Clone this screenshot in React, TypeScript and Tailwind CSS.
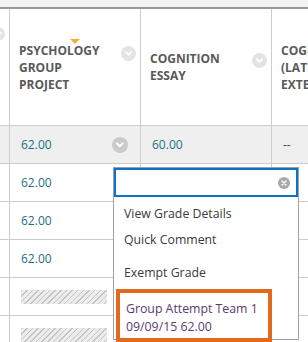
import React from 'react';

const font = "font-['Open_Sans',sans-serif]";

interface CircleProps {
  size: number;
  bg: string;
}

const ChevronCircle: React.FC<CircleProps> = ({ size, bg }) => (
  <div
    className={`flex shrink-0 items-center justify-center rounded-full ${bg}`}
    style={{ width: size, height: size }}
  >
    <svg width={size * 0.6} height={size * 0.6} viewBox="0 0 10 10">
      <polyline points="2,3.5 5,6.5 8,3.5" fill="none" stroke="#fff" strokeWidth="1.9" strokeLinecap="round" strokeLinejoin="round" />
    </svg>
  </div>
);

const Hatch = () => (
  <div className="h-[14px] w-[86px] bg-[#ececec] bg-[repeating-linear-gradient(135deg,#c4c4c4_0px,#c4c4c4_1px,transparent_1px,transparent_4px)]" />
);

const rows = [
  { a: '62.00', b: '60.00', c: '--', active: true },
  { a: '62.00', b: '', c: '' },
  { a: '62.00', b: '', c: '' },
  { a: '62.00', b: '', c: '' },
  { hatch: true },
  { hatch: true },
];

export default function App() {
  return (
    <div className={`relative h-[342px] w-[308px] overflow-hidden bg-white ${font}`}>
      <div className="h-[7px] bg-[#f3f3f3]" />
      <div className="h-[2px] bg-[#9a9a9a]" />

      {/* header */}
      <div className="flex h-[117px] border-b border-[#cccccc]">
        <div className="w-[10px] shrink-0 overflow-hidden border-r border-[#cccccc] pt-[18px]">
          <div className="-ml-[9px]">
            <ChevronCircle size={14} bg="bg-[#e4e4e4]" />
          </div>
        </div>
        <div className="relative flex w-[131px] shrink-0 items-center border-r border-[#cccccc] pl-[9px] pr-[4px]">
          <div className="flex w-full items-start justify-between">
            <div className="relative w-[88px] text-[12px] font-bold uppercase leading-[17px] text-[#595959]">
              <div className="absolute -top-[3px] left-[51px] h-0 w-0 border-x-[5px] border-t-[5px] border-x-transparent border-t-[#f3b133]" />
              Psychology Group Project
            </div>
            <div className="mt-[4px]">
              <ChevronCircle size={15} bg="bg-[#e4e4e4]" />
            </div>
          </div>
        </div>
        <div className="flex w-[131px] shrink-0 items-center border-r border-[#cccccc] pl-[9px] pr-[4px]">
          <div className="flex w-full items-start justify-between">
            <div className="w-[88px] text-[12px] font-bold uppercase leading-[17px] text-[#595959]">
              Cognition Essay
            </div>
            <div className="mt-[3px]">
              <ChevronCircle size={15} bg="bg-[#e4e4e4]" />
            </div>
          </div>
        </div>
        <div className="flex w-[131px] shrink-0 items-center pl-[9px]">
          <div className="w-[88px] text-[12px] font-bold uppercase leading-[17px] text-[#595959]">
            Cognition (Late Extension)
          </div>
        </div>
      </div>

      {/* rows */}
      {rows.map((r, i) => (
        <div
          key={i}
          className={`flex h-[38px] border-b border-[#cccccc] ${r.active ? 'bg-[#efefef]' : 'bg-white'}`}
        >
          <div className="w-[10px] shrink-0 border-r border-[#cccccc]" />
          <div className="flex w-[131px] shrink-0 items-center justify-between border-r border-[#cccccc] pl-[11px] pr-[12px]">
            {r.hatch ? (
              <Hatch />
            ) : (
              <span className="text-[12px] text-[#1c6f86]">{r.a}</span>
            )}
            {r.active && <ChevronCircle size={16} bg="bg-[#cbcbcb]" />}
          </div>
          <div className="flex w-[131px] shrink-0 items-center border-r border-[#cccccc] pl-[11px]">
            {!r.hatch && <span className="text-[12px] text-[#1c6f86]">{r.b}</span>}
          </div>
          <div className="flex w-[131px] shrink-0 items-center pl-[11px]">
            {!r.hatch && <span className="text-[12px] text-[#444]">{r.c}</span>}
          </div>
        </div>
      ))}

      {/* grade cell menu */}
      <div className="absolute left-[113px] top-[167px] flex h-[173px] w-[186px] flex-col border border-[#a0a0a0] bg-white">
        <div className="relative h-[29px] shrink-0 border-2 border-[#0a72c8]">
          <div className="absolute right-[6px] top-1/2 flex h-[12px] w-[12px] -translate-y-1/2 items-center justify-center rounded-full bg-[#a9a9a9]">
            <svg width="6" height="6" viewBox="0 0 6 6">
              <path d="M1 1L5 5M5 1L1 5" stroke="#fff" strokeWidth="1.4" strokeLinecap="round" />
            </svg>
          </div>
        </div>
        <div className="pl-[10px] text-[12.3px] text-[#3a3a3a]">
          <div className="flex h-[29px] items-center pt-[6px]">View Grade Details</div>
          <div className="flex h-[28px] items-center">Quick Comment</div>
          <div className="flex h-[34px] items-center pt-[4px]">Exempt Grade</div>
        </div>
        <div className="ml-[2px] mt-[1px] h-[53px] w-[156px] shrink-0 border-4 border-[#e26a1f] pl-[6px] pt-[7px] text-[12.3px] leading-[18px] text-[#5b3a70]">
          <div>Group Attempt Team 1</div>
          <div>09/09/15 62.00</div>
        </div>
      </div>
    </div>
  );
}
